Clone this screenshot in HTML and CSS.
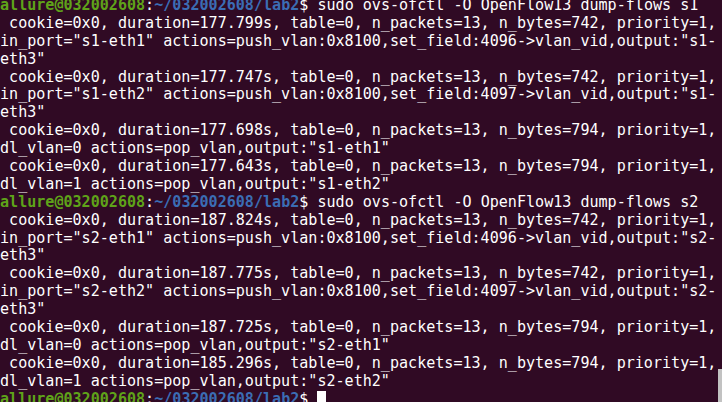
FILE: index.html
```html
<!DOCTYPE html>
<html>
<head>
<meta charset="utf-8">
<link rel="stylesheet" href="styles.css">
</head>
<body>
<div class="term">
<div class="line"><span class="user">allure@032002608</span>:<span class="path">~/032002608/lab2</span>$ sudo ovs-ofctl -O OpenFlow13 dump-flows s1</div>
<div class="line"> cookie=0x0, duration=177.799s, table=0, n_packets=13, n_bytes=742, priority=1,</div>
<div class="line">in_port="s1-eth1" actions=push_vlan:0x8100,set_field:4096-&gt;vlan_vid,output:"s1-</div>
<div class="line">eth3"</div>
<div class="line"> cookie=0x0, duration=177.747s, table=0, n_packets=13, n_bytes=742, priority=1,</div>
<div class="line">in_port="s1-eth2" actions=push_vlan:0x8100,set_field:4097-&gt;vlan_vid,output:"s1-</div>
<div class="line">eth3"</div>
<div class="line"> cookie=0x0, duration=177.698s, table=0, n_packets=13, n_bytes=794, priority=1,</div>
<div class="line">dl_vlan=0 actions=pop_vlan,output:"s1-eth1"</div>
<div class="line"> cookie=0x0, duration=177.643s, table=0, n_packets=13, n_bytes=794, priority=1,</div>
<div class="line">dl_vlan=1 actions=pop_vlan,output:"s1-eth2"</div>
<div class="line"><span class="user">allure@032002608</span>:<span class="path">~/032002608/lab2</span>$ sudo ovs-ofctl -O OpenFlow13 dump-flows s2</div>
<div class="line"> cookie=0x0, duration=187.824s, table=0, n_packets=13, n_bytes=742, priority=1,</div>
<div class="line">in_port="s2-eth1" actions=push_vlan:0x8100,set_field:4096-&gt;vlan_vid,output:"s2-</div>
<div class="line">eth3"</div>
<div class="line"> cookie=0x0, duration=187.775s, table=0, n_packets=13, n_bytes=742, priority=1,</div>
<div class="line">in_port="s2-eth2" actions=push_vlan:0x8100,set_field:4097-&gt;vlan_vid,output:"s2-</div>
<div class="line">eth3"</div>
<div class="line"> cookie=0x0, duration=187.725s, table=0, n_packets=13, n_bytes=794, priority=1,</div>
<div class="line">dl_vlan=0 actions=pop_vlan,output:"s2-eth1"</div>
<div class="line"> cookie=0x0, duration=185.296s, table=0, n_packets=13, n_bytes=794, priority=1,</div>
<div class="line">dl_vlan=1 actions=pop_vlan,output:"s2-eth2"</div>
<div class="line"><span class="user">allure@032002608</span>:<span class="path">~/032002608/lab2</span>$ <span class="cursor"></span></div>
</div>
<div class="scrollbar"></div>
</body>
</html>
```

FILE: styles.css
```css
html, body {
  margin: 0;
  padding: 0;
  width: 722px;
  height: 402px;
  overflow: hidden;
  background: #300a24;
}
body {
  position: relative;
}
.term {
  margin-top: -3px;
  padding-left: 0;
  font-family: "DejaVu Sans Mono", "Liberation Mono", monospace;
  font-size: 15.07px;
  line-height: 17.9px;
  color: #ffffff;
}
.line {
  white-space: pre;
  height: 17.9px;
}
.user {
  color: #5fa319;
  font-weight: bold;
}
.path {
  color: #3b6db4;
  font-weight: bold;
}
.cursor {
  display: inline-block;
  width: 9px;
  height: 17.9px;
  background: #ffffff;
  vertical-align: top;
}
.scrollbar {
  position: absolute;
  right: 0;
  top: 369px;
  width: 4px;
  height: 33px;
  background: #c2c2c2;
}
```
